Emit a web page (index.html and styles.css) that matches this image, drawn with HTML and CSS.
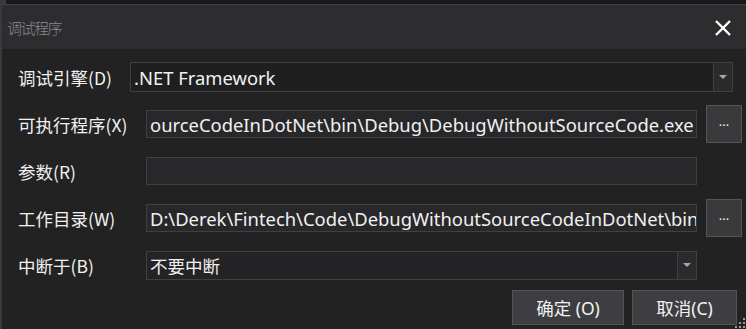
FILE: index.html
```html
<!DOCTYPE html>
<html lang="zh-CN">
<head>
  <meta charset="UTF-8">
  <meta name="viewport" content="width=device-width, initial-scale=1.0">
  <title>调试程序</title>
  <link rel="stylesheet" href="styles.css">
</head>
<body>
  <div class="top-strip"><div class="strip-corner"></div></div>
  <div class="dialog">
    <div class="titlebar">
      <span class="title">调试程序</span>
      <svg class="close" width="20" height="16" viewBox="0 0 20 16">
        <path d="M3 1 L17 15 M17 1 L3 15" stroke="#fff" stroke-width="2.4" fill="none"/>
      </svg>
    </div>

    <div class="form">
      <div class="row">
        <label class="label short">调试引擎(D)</label>
        <div class="combo combo-wide">
          <span class="value">.NET Framework</span>
          <span class="arrow"><i></i></span>
        </div>
      </div>

      <div class="row">
        <label class="label">可执行程序(X)</label>
        <div class="field">
          <span class="value">ourceCodeInDotNet\bin\Debug\DebugWithoutSourceCode.exe</span>
        </div>
        <button class="browse">...</button>
      </div>

      <div class="row">
        <label class="label">参数(R)</label>
        <div class="field"></div>
      </div>

      <div class="row">
        <label class="label">工作目录(W)</label>
        <div class="field">
          <span class="value">D:\Derek\Fintech\Code\DebugWithoutSourceCodeInDotNet\bin</span>
        </div>
        <button class="browse">...</button>
      </div>

      <div class="row">
        <label class="label">中断于(B)</label>
        <div class="combo combo-field">
          <span class="value cjk">不要中断</span>
          <span class="arrow"><i></i></span>
        </div>
      </div>
    </div>

    <div class="actions">
      <button class="btn ok">确定 (O)</button>
      <button class="btn cancel">取消(C)</button>
    </div>

    <svg class="grip" width="11" height="11" viewBox="0 0 11 11">
      <rect x="8" y="0" width="2" height="2" fill="#9a9a9a"/>
      <rect x="4" y="4" width="2" height="2" fill="#9a9a9a"/>
      <rect x="8" y="4" width="2" height="2" fill="#9a9a9a"/>
      <rect x="0" y="8" width="2" height="2" fill="#9a9a9a"/>
      <rect x="4" y="8" width="2" height="2" fill="#9a9a9a"/>
      <rect x="8" y="8" width="2" height="2" fill="#9a9a9a"/>
    </svg>
  </div>
</body>
</html>
```

FILE: styles.css
```css
body {
  margin: 0;
  width: 746px;
  height: 329px;
  overflow: hidden;
  background: #1b1b1c;
  font-family: "Noto Sans", "Noto Sans CJK SC", sans-serif;
  color: #f1f1f1;
}
.top-strip {
  height: 4px;
  background: #18181a;
}
.strip-corner {
  width: 6px;
  height: 4px;
  background: #3a3a3c;
}
.dialog {
  position: relative;
  height: 325px;
  border-top: 1px solid #434346;
  border-left: 2px solid #3a3a3c;
  background: #222223;
  box-sizing: border-box;
}
.titlebar {
  height: 44px;
  display: flex;
  align-items: center;
  justify-content: space-between;
  padding: 0 13px 0 5px;
  background: #2d2d30;
}
.title {
  font-family: "Noto Sans CJK SC", sans-serif;
  font-size: 15px;
  font-weight: 300;
  color: #8a8a8c;
  letter-spacing: -1.5px;
}
.close {
  margin-top: 2px;
}
.form {
  display: flex;
  flex-direction: column;
  gap: 1px;
  padding: 5px 0 0 16px;
}
.row {
  display: flex;
  align-items: center;
  height: 46px;
}
.label {
  width: 128px;
  flex: none;
  font-family: "Noto Sans CJK SC", sans-serif;
  font-size: 17.5px;
  white-space: nowrap;
}
.label.short {
  width: 112px;
}
.value {
  font-size: 18.4px;
  white-space: nowrap;
}
.value.cjk {
  font-family: "Noto Sans CJK SC", sans-serif;
  font-size: 17.5px;
}
.field,
.combo {
  display: flex;
  align-items: center;
  box-sizing: border-box;
  height: 28px;
  border: 1px solid #3f3f46;
  background: #28282a;
  overflow: hidden;
  padding: 0 3px;
}
.field {
  width: 551px;
}
.combo {
  justify-content: space-between;
  padding-right: 0;
}
.combo-wide {
  width: 603px;
  height: 30px;
  background: #1f1f20;
}
.combo-field {
  width: 551px;
  height: 29px;
  background: #242426;
}
.arrow {
  display: flex;
  align-items: center;
  justify-content: center;
  width: 18px;
  height: 100%;
  border-left: 1px solid #3f3f46;
  background: #2b2b2d;
}
.arrow i {
  width: 0;
  height: 0;
  border-left: 4px solid transparent;
  border-right: 4px solid transparent;
  border-top: 4px solid #a8a8a8;
}
.browse {
  margin-left: 9px;
  width: 36px;
  height: 38px;
  padding: 0 0 6px;
  border: 1px solid #555558;
  background: #3a3a3d;
  color: #f1f1f1;
  font-family: "Noto Sans", sans-serif;
  font-size: 13px;
}
.actions {
  display: flex;
  justify-content: flex-end;
  gap: 8px;
  padding: 2px 9px 0 0;
}
.btn {
  height: 35px;
  border: 1px solid #545457;
  background: #3e3e42;
  color: #f1f1f1;
  font-family: "Noto Sans", "Noto Sans CJK SC", sans-serif;
  font-size: 17.5px;
  padding: 0;
}
.ok {
  width: 112px;
}
.cancel {
  width: 105px;
}
.grip {
  position: absolute;
  right: 0;
  bottom: 0;
}
```
